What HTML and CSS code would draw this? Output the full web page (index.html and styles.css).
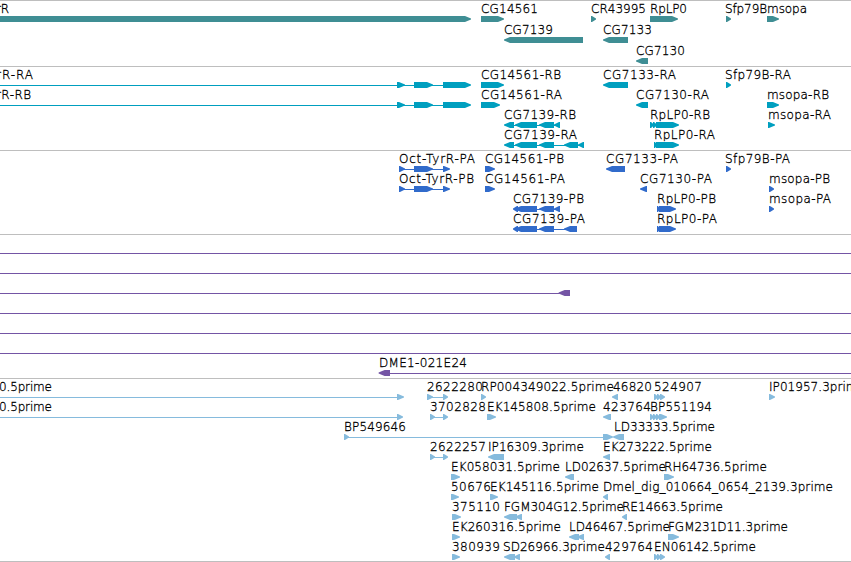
FILE: index.html
```
<!DOCTYPE html>
<html lang="en">
<head>
<meta charset="utf-8">
<title>Genome browser</title>
<link rel="stylesheet" href="styles.css">
</head>
<body>
<main class="browser">
<section class="track gene"></section>
<section class="track transcript"></section>
<section class="track cds"></section>
<section class="track bac"></section>
<section class="track est"></section>
</main>
<script src="tracks.js"></script>
</body>
</html>
```
FILE: styles.css
```
body { margin: 0; background: #fff; overflow: hidden; }
.browser { display: flex; flex-direction: column; width: 851px; height: 562px; overflow: hidden; border-bottom: 1px solid #bebebe; box-sizing: border-box; }
.track { box-sizing: border-box; flex: none; border-top: 1px solid #bebebe; }
.track svg { display: block; width: 851px; height: 100%; overflow: hidden; }
.track text { font: 200 12px "DejaVu Sans Light", "DejaVu Sans", sans-serif; fill: #000; stroke: #000; stroke-width: 0.3px; }
.gene { height: 66px; color: #3f8e94; }
.transcript { height: 84px; color: #009fbf; }
.cds { height: 84px; color: #316bcb; }
.bac { height: 144px; color: #7455a5; }
.est { height: 183px; color: #86bbdd; }
.shape { fill: currentColor; }
```
FILE: tracks.js
```
// Feature: [row, label, label start, label end, intron line or null, blocks]
// Block: [start, end], plus "<" for the reverse strand.
const tracks = {
  gene: [
    [0, "rR", -4, 9, null, [[-10, 471]]],
    [0, "CG14561", 481, 538, null, [[481, 504]]],
    [1, "CG7139", 504, 553, null, [[504, 583, "<"]]],
    [0, "CR43995", 591, 646, null, [[591, 596]]],
    [1, "CG7133", 603, 652, null, [[603, 628, "<"]]],
    [0, "RpLP0", 650, 687, null, [[650, 678]]],
    [2, "CG7130", 636, 685, null, [[636, 648, "<"]]],
    [0, "Sfp79B", 725, 767, null, [[726, 731]]],
    [0, "msopa", 767, 807, null, [[767, 779]]]
  ],
  transcript: [
    [0, "rR-RA", -4, 33, [0, 470], [[397, 405], [414, 433], [443, 471]]],
    [1, "rR-RB", -4, 31, [0, 470], [[397, 405], [414, 433], [443, 471]]],
    [0, "CG14561-RB", 481, 561, null, [[481, 504]]],
    [1, "CG14561-RA", 481, 562, null, [[481, 500]]],
    [2, "CG7139-RB", 504, 576, [510, 555], [[504, 514, "<"], [515, 537, "<"], [539, 554, "<"], [554, 560, "<"]]],
    [3, "CG7139-RA", 504, 577, [510, 580], [[504, 514, "<"], [515, 537, "<"], [539, 554, "<"], [564, 578, "<"], [578, 584, "<"]]],
    [0, "CG7133-RA", 603, 676, null, [[603, 628, "<"]]],
    [1, "CG7130-RA", 636, 709, null, [[636, 648, "<"]]],
    [2, "RpLP0-RB", 650, 710, null, [[650, 654], [653, 657], [656, 679]]],
    [3, "RpLP0-RA", 654, 715, null, [[654, 657], [656, 679]]],
    [0, "Sfp79B-RA", 725, 791, null, [[726, 731]]],
    [1, "msopa-RB", 767, 829, null, [[767, 779]]],
    [2, "msopa-RA", 768, 831, null, [[768, 775]]]
  ],
  cds: [
    [0, "Oct-TyrR-PA", 399, 475, [400, 448], [[399, 405], [414, 433], [443, 450]]],
    [1, "Oct-TyrR-PB", 399, 474, [400, 448], [[399, 405], [414, 433], [443, 450]]],
    [0, "CG14561-PB", 485, 564, null, [[485, 495]]],
    [1, "CG14561-PA", 485, 565, null, [[485, 495]]],
    [2, "CG7139-PB", 513, 584, [520, 556], [[513, 518, "<"], [515, 537, "<"], [539, 554, "<"], [554, 560, "<"]]],
    [3, "CG7139-PA", 513, 585, [520, 570], [[513, 518, "<"], [515, 537, "<"], [539, 554, "<"], [564, 577, "<"]]],
    [0, "CG7133-PA", 606, 678, null, [[606, 625, "<"]]],
    [1, "CG7130-PA", 640, 712, null, [[640, 647, "<"]]],
    [2, "RpLP0-PB", 657, 716, null, [[657, 660], [659, 676]]],
    [3, "RpLP0-PA", 657, 717, null, [[657, 660], [659, 676]]],
    [0, "Sfp79B-PA", 725, 790, null, [[726, 731]]],
    [1, "msopa-PB", 769, 830, null, [[769, 774]]],
    [2, "msopa-PA", 769, 831, null, [[769, 774]]]
  ],
  bac: [
    [0, "", 0, 0, [0, 851], []],
    [1, "", 0, 0, [0, 851], []],
    [2, "", 0, 0, [0, 565], [[558.6, 570, "<"]]],
    [3, "", 0, 0, [0, 851], []],
    [4, "", 0, 0, [0, 851], []],
    [5, "", 0, 0, [0, 851], []],
    [6, "DME1-021E24", 379, 467, [388, 851], [[378.6, 390, "<"]]]
  ],
  est: [
    [0, "0.5prime", -1, 52, [0, 400], [[397, 404]]],
    [1, "0.5prime", -1, 52, [0, 400], [[397, 403]]],
    [2, "BP549646", 344, 406, [346, 610], [[344, 349]]],
    [0, "2622280", 427, 483, [430, 446], [[427, 433], [443, 448]]],
    [1, "3702828", 430, 486, [432, 446], [[430, 435], [443, 448]]],
    [3, "2622257", 430, 486, [432, 446], [[430, 435], [443, 448]]],
    [0, "RP004349022.5prime", 481, 614, null, [[481, 486]]],
    [1, "EK145808.5prime", 487, 596, null, [[487, 496]]],
    [3, "IP16309.3prime", 488, 584, null, [[488, 504, "<"]]],
    [0, "46820", 613, 652, null, [[612, 618, "<"]]],
    [0, "524907", 654, 702, null, [[654, 658], [657, 661], [660, 665]]],
    [1, "423764", 603, 651, null, [[603, 611, "<"]]],
    [1, "BP551194", 650, 712, null, [[650, 654], [653, 657], [656, 660], [659, 667]]],
    [2, "LD33333.5prime", 614, 715, null, [[603, 613], [613, 624, "<"]]],
    [3, "EK273222.5prime", 603, 712, null, [[603, 610, "<"]]],
    [0, "IP01957.3prime", 769, 865, null, [[769, 775]]],
    [4, "EK058031.5prime", 451, 560, null, [[451, 460]]],
    [5, "50676", 451, 491, null, [[451, 459]]],
    [6, "375110", 452, 500, null, [[452, 461]]],
    [7, "EK260316.5prime", 452, 561, null, [[452, 460]]],
    [8, "380939", 452, 500, null, [[452, 460]]],
    [4, "LD02637.5prime", 565, 666, null, [[565, 574, "<"]]],
    [4, "RH64736.5prime", 664, 767, null, [[664, 674]]],
    [5, "EK145116.5prime", 490, 599, null, [[490, 498]]],
    [5, "Dmel_dig_010664_0654_2139.3prime", 603, 833, null, [[603, 608, "<"]]],
    [6, "FGM304G12.5prime", 504, 624, null, [[504, 517, "<"], [515, 522, "<"]]],
    [6, "RE14663.5prime", 622, 723, null, [[622, 627, "<"]]],
    [7, "LD46467.5prime", 569, 670, null, [[569, 579, "<"], [577, 584, "<"]]],
    [7, "FGM231D11.3prime", 668, 788, null, [[668, 679]]],
    [8, "SD26966.3prime", 503, 605, null, [[504, 515, "<"], [514, 520, "<"]]],
    [8, "429764", 605, 653, null, [[605, 610, "<"]]],
    [8, "EN06142.5prime", 654, 756, null, [[654, 658], [657, 661], [660, 665]]]
  ]
};

function block([start, end, strand], y) {
  const head = Math.min(6, end - start - 1);
  if (strand === "<") {
    return `<path class="shape" d="M${end} ${y}H${start + head}L${start} ${y + 2.5}V${y + 3.5}L${start + head} ${y + 6}H${end}Z"/>`;
  }
  return `<path class="shape" d="M${start} ${y}H${end - head}L${end} ${y + 2.5}V${y + 3.5}L${end - head} ${y + 6}H${start}Z"/>`;
}

for (const [name, features] of Object.entries(tracks)) {
  const pitch = name === "gene" ? 21 : 20;
  let drawing = "";
  for (const [row, label, from, to, line, blocks] of features) {
    const y = 15 + row * pitch;
    if (line) drawing += `<rect class="shape" x="${line[0]}" y="${y + 3}" width="${line[1] - line[0]}" height="1"/>`;
    drawing += blocks.map(b => block(b, y)).join("");
    if (label) drawing += `<text x="${from}" y="${y - 3}" textLength="${to - from}">${label}</text>`;
  }
  document.querySelector("." + name).innerHTML = `<svg>${drawing}</svg>`;
}
```
